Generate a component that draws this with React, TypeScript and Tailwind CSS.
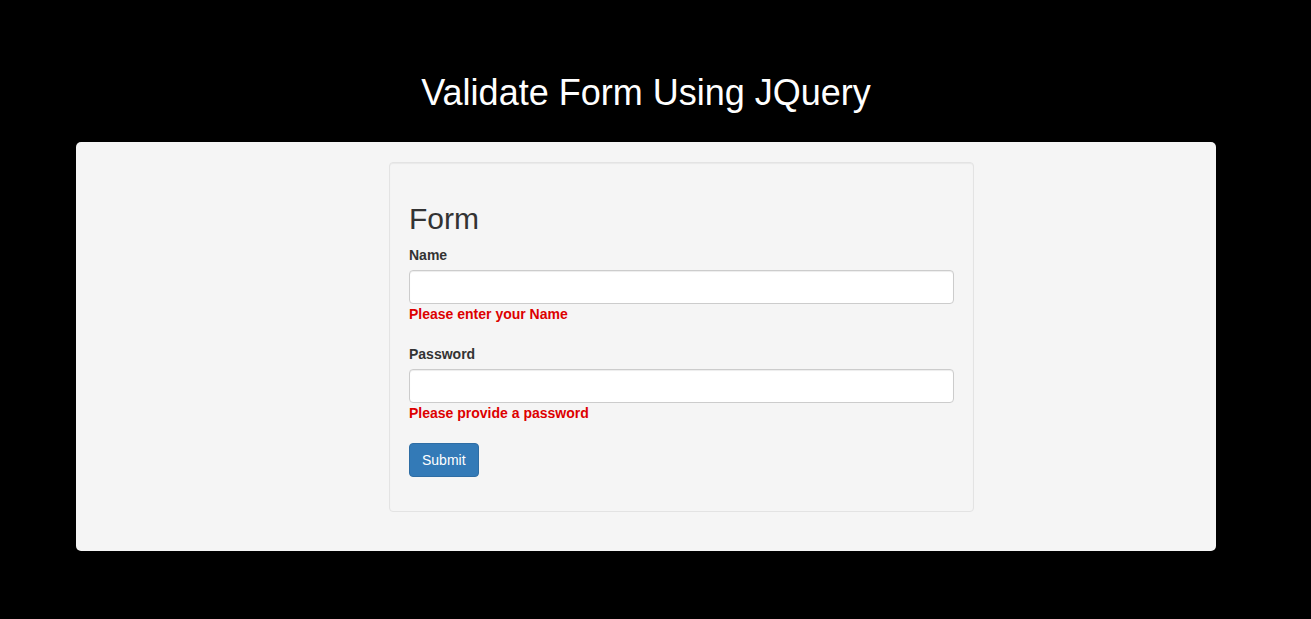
import React from 'react';

const App: React.FC = () => {
    return (
        <div className="bg-black min-h-[619px] w-full text-[14px] leading-[20px] text-[#333333]" style={{ fontFamily: '"Liberation Sans", Arial, sans-serif' }}>
            <div className="w-[1292px]">
                <h1 className="pt-[73px] text-center text-[36px] leading-[40px] text-white">Validate Form Using JQuery</h1>

                <div className="mx-auto mt-[29px] w-[1140px] rounded-[5px] bg-[#f5f5f5] pt-[20px] pb-[39px]">
                    <div className="ml-[313px] w-[585px] rounded-[4px] border border-[#e3e3e3] bg-[#f5f5f5] px-[19px] py-[19px] shadow-[inset_0_1px_1px_rgba(0,0,0,0.05)]">
                        <form onSubmit={(e) => e.preventDefault()}>
                            <h2 className="mt-[20px] mb-[10px] text-[30px] leading-[33px]">Form</h2>

                            <div className="mb-[15px]">
                                <label className="mb-[5px] inline-block font-bold">Name</label>
                                <input
                                    type="text"
                                    className="block h-[34px] w-full rounded-[4px] border border-[#cccccc] bg-white px-3 shadow-[inset_0_1px_1px_rgba(0,0,0,0.075)] outline-none"
                                />
                                <label className="mb-[5px] inline-block font-bold text-[#dd0000]">Please enter your Name</label>
                            </div>

                            <div className="mb-[15px]">
                                <label className="mb-[5px] inline-block font-bold">Password</label>
                                <input
                                    type="password"
                                    className="block h-[34px] w-full rounded-[4px] border border-[#cccccc] bg-white px-3 shadow-[inset_0_1px_1px_rgba(0,0,0,0.075)] outline-none"
                                />
                                <label className="mb-[5px] inline-block font-bold text-[#dd0000]">Please provide a password</label>
                            </div>

                            <div className="mb-[15px]">
                                <button
                                    type="submit"
                                    className="h-[34px] rounded-[4px] border border-[#2e6da4] bg-[#337ab7] px-[12px] text-white"
                                >
                                    Submit
                                </button>
                            </div>
                        </form>
                    </div>
                </div>
            </div>
        </div>
    );
};

export default App;
